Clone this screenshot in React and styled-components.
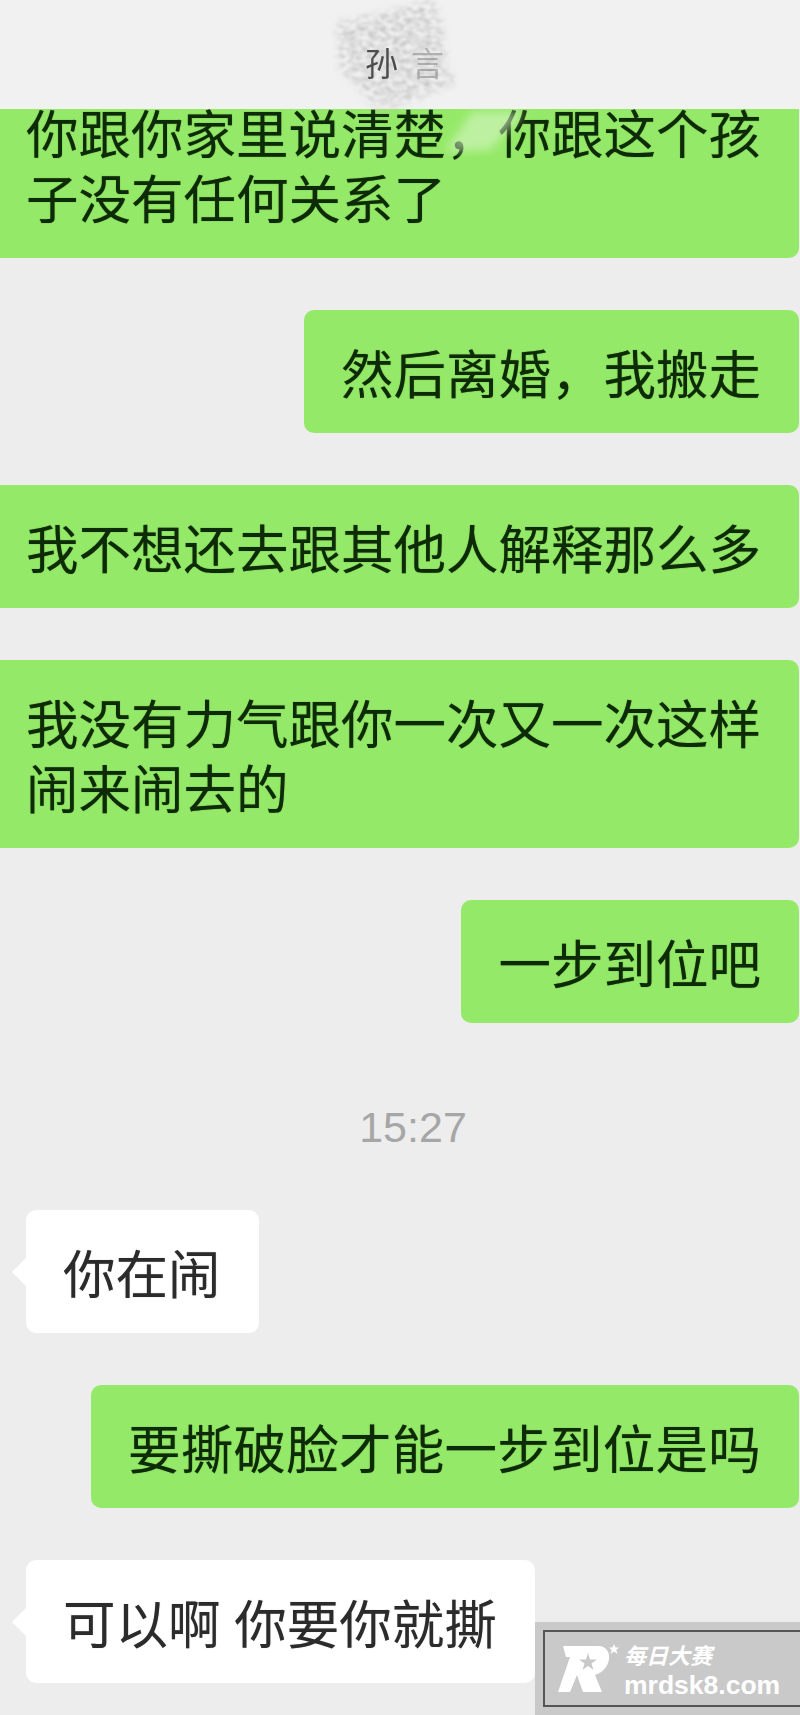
import React from "react"
import styled, { createGlobalStyle } from "styled-components"

const GlobalStyle = createGlobalStyle`
html, body {
    margin: 0;
    padding: 0;
    background: #ededed;
}
`
const Page = styled.div`
position: relative;
width: 800px;
height: 1715px;
overflow: hidden;
background: #ededed;
font-family: "Noto Sans CJK SC", "Noto Sans", sans-serif;
`
const Header = styled.div`
position: relative;
z-index: 1;
height: 109px;
background: #f1f1f1;
`
const Title = styled.div`
position: absolute;
left: 365px;
top: 42px;
z-index: 3;
display: flex;
gap: 13px;
font-size: 33px;
line-height: 40px;
color: #4d4d4d;
filter: blur(0.7px);
`
const FadedChar = styled.span`
opacity: 0.35;
`
const Scribble = styled.svg`
position: absolute;
left: 0;
top: 0;
z-index: 2;
pointer-events: none;
`
const Messages = styled.div`
display: flex;
flex-direction: column;
gap: 52px;
padding-right: 1px;
`
const Bubble = styled.div`
position: relative;
align-self: ${props => (props.$mine ? "flex-end" : "flex-start")};
margin-left: ${props => (props.$mine ? "0" : "26px")};
padding: 29px 38px 29px 37px;
border-radius: 10px;
background: ${props => (props.$mine ? "#95e968" : "#ffffff")};
color: ${props => (props.$mine ? "#0e2b08" : "#2b2b2b")};
font-size: 52.5px;
line-height: 65px;
word-spacing: 2px;
text-shadow: 0 0 1px ${props => (props.$mine ? "rgba(14, 43, 8, 0.55)" : "rgba(43, 43, 43, 0.4)")};
${props => !props.$mine && `
&::before {
    content: "";
    position: absolute;
    left: -14px;
    top: 50%;
    margin-top: -14px;
    border: 14px solid transparent;
    border-left: 0;
    border-right-color: #ffffff;
}
`}
`
const WideBubble = styled(Bubble)`
width: 735px;
`
const TopBubble = styled(WideBubble)`
margin-top: -39px;
`
const LooseBubble = styled(Bubble)`
letter-spacing: 0.25px;
`
const Time = styled.div`
margin: 78px 0 57px;
padding-left: 26px;
text-align: center;
font-family: "Liberation Sans", Arial, sans-serif;
font-size: 43px;
line-height: 52px;
color: #a6a6a6;
`
const Watermark = styled.div`
position: absolute;
right: 0;
bottom: 0;
box-sizing: border-box;
width: 265px;
height: 93px;
padding: 8px 0 8px 8px;
background: #c9c9c9;
`
const WatermarkInner = styled.div`
display: flex;
align-items: center;
gap: 2px;
box-sizing: border-box;
height: 100%;
padding-left: 13px;
border: 2px solid #555555;
border-right: none;
color: #ffffff;
`
const WatermarkText = styled.div`
display: flex;
flex-direction: column;
`
const WatermarkName = styled.span`
font-size: 22px;
line-height: 32px;
font-style: italic;
font-weight: 700;
`
const WatermarkUrl = styled.span`
font-family: "Liberation Sans", Arial, sans-serif;
font-size: 26.5px;
line-height: 30px;
font-weight: 700;
`

function Smudge() {
    return (
        <Scribble width="800" height="240" viewBox="0 0 800 240">
            <defs>
                <filter id="grain" x="-10%" y="-10%" width="120%" height="120%">
                    <feGaussianBlur in="SourceGraphic" stdDeviation="4" result="shape" />
                    <feTurbulence type="fractalNoise" baseFrequency="0.16 0.22" numOctaves="3" seed="7" />
                    <feColorMatrix values="0 0 0 0 0.52  0 0 0 0 0.52  0 0 0 0 0.52  1.8 0 0 0 -0.55" />
                    <feGaussianBlur stdDeviation="0.9" />
                    <feComposite in2="shape" operator="in" />
                </filter>
                <filter id="soft">
                    <feGaussianBlur stdDeviation="5" />
                </filter>
            </defs>
            <polygon points="433,0 337,23 340,70 360,90 380,112 457,83 447,70 442,23" fill="#777" filter="url(#grain)" />
            <polygon points="472,112 525,112 490,150 445,152" fill="#d8f6c8" opacity="0.6" filter="url(#soft)" />
        </Scribble>
    )
}

function Logo() {
    return (
        <svg width="64" height="50" viewBox="0 0 64 50">
            <path fill="#ffffff" fillRule="evenodd" d="M5 2H40C48 2 52 8 51 15C50 23 44 29 37 31L44 48H25L19 31L12 48H0L12 13H8ZM30 9L32 15.500H39L33.500 19.500L35.500 26L30 22L24.500 26L26.500 19.500L21 15.500H28Z" />
            <polygon fill="#ffffff" points="56,0 57.500,3.500 61,3.500 58.200,6 59.500,10 56,7.600 52.500,10 53.800,6 51,3.500 54.500,3.500" />
        </svg>
    )
}

export default function App() {
    return (
        <Page>
            <GlobalStyle />
            <Header />
            <Title>
                <span>孙</span>
                <FadedChar>言</FadedChar>
            </Title>
            <Smudge />
            <Messages>
                <TopBubble $mine>你跟你家里说清楚，你跟这个孩子没有任何关系了</TopBubble>
                <Bubble $mine>然后离婚，我搬走</Bubble>
                <WideBubble $mine>我不想还去跟其他人解释那么多</WideBubble>
                <WideBubble $mine>我没有力气跟你一次又一次这样闹来闹去的</WideBubble>
                <Bubble $mine>一步到位吧</Bubble>
            </Messages>
            <Time>15:27</Time>
            <Messages>
                <Bubble>你在闹</Bubble>
                <LooseBubble $mine>要撕破脸才能一步到位是吗</LooseBubble>
                <Bubble>可以啊 你要你就撕</Bubble>
            </Messages>
            <Watermark>
                <WatermarkInner>
                    <Logo />
                    <WatermarkText>
                        <WatermarkName>每日大赛</WatermarkName>
                        <WatermarkUrl>mrdsk8.com</WatermarkUrl>
                    </WatermarkText>
                </WatermarkInner>
            </Watermark>
        </Page>
    )
}
